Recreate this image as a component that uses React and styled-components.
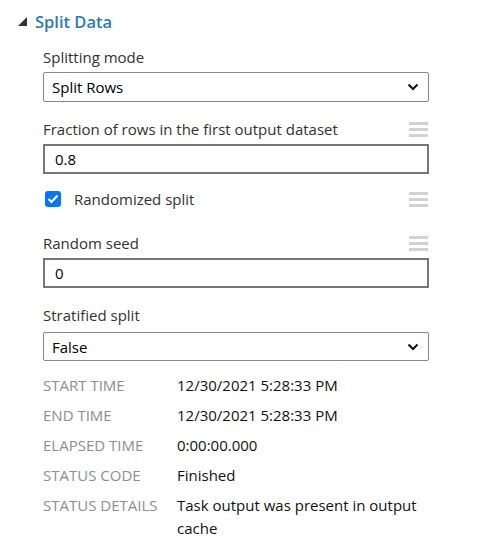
import styled, { createGlobalStyle } from 'styled-components';

const GlobalStyle = createGlobalStyle`
  body {
    margin: 0;
    background: #fff;
    font-family: "Open Sans", "Noto Sans", sans-serif;
    color: #212121;
  }
`;

const Panel = styled.div`
  width: 477px;
  height: 557px;
  box-sizing: border-box;
  padding: 10px 0 0 18px;
`;

const Header = styled.button`
  display: flex;
  align-items: center;
  gap: 8px;
  border: 0;
  background: none;
  padding: 0;
  height: 22px;
  font: 600 16.5px "Open Sans", sans-serif;
  color: #2b7bb0;
  cursor: pointer;
`;

const Body = styled.div`
  width: 386px;
  margin-left: 25px;
  margin-top: 15px;
  display: flex;
  flex-direction: column;
`;

const Field = styled.div`
  display: flex;
  flex-direction: column;
  gap: ${(p) => p.$gap || 6}px;
  margin-bottom: ${(p) => p.$mb || 0}px;
`;

const LabelRow = styled.div`
  display: flex;
  align-items: center;
  justify-content: space-between;
  height: 20px;
  font-size: 15px;
  color: #323130;
`;

const Handle = styled.span`
  display: flex;
  flex-direction: column;
  gap: 3px;
  width: 19px;
  margin-right: 1px;
  span {
    height: 3px;
    background: #d2d2d2;
  }
`;

const SelectBox = styled.div`
  height: ${(p) => p.$h || 30}px;
  box-sizing: border-box;
  border: 1px solid #8a8886;
  border-radius: 2px;
  display: flex;
  align-items: center;
  justify-content: space-between;
  padding: 0 9px 0 8px;
  font-size: 15px;
  color: #000;
`;

const TextBox = styled.div`
  height: 30px;
  box-sizing: border-box;
  border: 2px solid #767676;
  display: flex;
  align-items: center;
  padding-left: 10px;
  font-size: 15px;
  color: #000;
`;

const CheckRow = styled.label`
  display: flex;
  align-items: center;
  height: 20px;
  font-size: 15px;
  color: #323130;
`;

const Box = styled.span`
  width: 16px;
  height: 16px;
  border-radius: 3px;
  background: #0075ff;
  display: flex;
  align-items: center;
  justify-content: center;
  margin: 0 13px 0 2px;
`;

const Info = styled.div`
  display: grid;
  grid-template-columns: 134px 1fr;
  row-gap: 10px;
  font-size: 15px;
  line-height: 20px;
  margin-top: 14px;
`;

const Key = styled.div`
  color: #8e8e8e;
`;

const Value = styled.div`
  color: #111;
  line-height: ${(p) => (p.$wrap ? '23px' : '20px')};
  margin-top: ${(p) => (p.$wrap ? '-1px' : 0)};
  width: 250px;
`;

const DragHandle = () => (
  <Handle>
    <span />
    <span />
    <span />
  </Handle>
);

const Chevron = () => (
  <svg width="12" height="8" viewBox="0 0 12 8">
    <path d="M1.5 1.5 L6 6 L10.5 1.5" fill="none" stroke="#111" strokeWidth="2" />
  </svg>
);

const info = [
  ['START TIME', '12/30/2021 5:28:33 PM'],
  ['END TIME', '12/30/2021 5:28:33 PM'],
  ['ELAPSED TIME', '0:00:00.000'],
  ['STATUS CODE', 'Finished'],
  ['STATUS DETAILS', 'Task output was present in output cache'],
];

export default function App() {
  return (
    <>
      <GlobalStyle />
      <Panel>
        <Header>
          <svg width="9" height="9" viewBox="0 0 9 9">
            <path d="M9 0 L9 9 L0 9 Z" fill="#333" />
          </svg>
          Split Data
        </Header>
        <Body>
          <Field $gap={5} $mb={17}>
            <LabelRow>Splitting mode</LabelRow>
            <SelectBox>
              Split Rows
              <Chevron />
            </SelectBox>
          </Field>
          <Field $gap={5} $mb={15}>
            <LabelRow>
              Fraction of rows in the first output dataset
              <DragHandle />
            </LabelRow>
            <TextBox>0.8</TextBox>
          </Field>
          <Field $mb={24}>
            <CheckRow>
              <Box>
                <svg width="12" height="10" viewBox="0 0 12 10">
                  <path d="M1.5 5 L4.5 8 L10.5 1.5" fill="none" stroke="#fff" strokeWidth="2.2" />
                </svg>
              </Box>
              Randomized split
              <span style={{ marginLeft: 'auto' }}>
                <DragHandle />
              </span>
            </CheckRow>
          </Field>
          <Field $gap={5} $mb={17}>
            <LabelRow>
              Random seed
              <DragHandle />
            </LabelRow>
            <TextBox>0</TextBox>
          </Field>
          <Field $gap={7}>
            <LabelRow>Stratified split</LabelRow>
            <SelectBox $h={29}>
              False
              <Chevron />
            </SelectBox>
          </Field>
          <Info>
            {info.map(([k, v]) => (
              <>
                <Key key={k}>{k}</Key>
                <Value $wrap={k === 'STATUS DETAILS'}>{v}</Value>
              </>
            ))}
          </Info>
        </Body>
      </Panel>
    </>
  );
}
